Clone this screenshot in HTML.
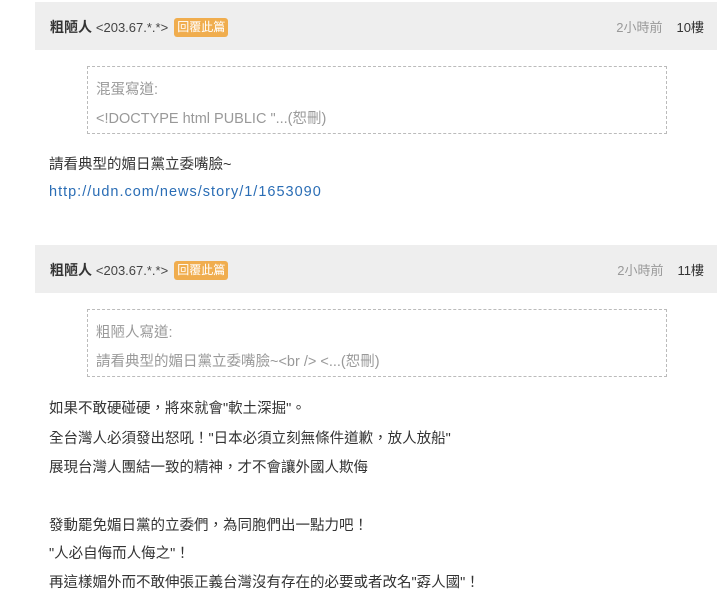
<!DOCTYPE html>
<html><head><meta charset="utf-8"><style>
body{margin:0;width:720px;height:610px;background:#fff;font-family:"Liberation Sans","Noto Sans CJK TC",sans-serif;font-size:14.5px;color:#333;position:relative;overflow:hidden}
.hd{position:absolute;left:35px;width:682px;height:48px;background:#eeeeee}
.hd .n{position:absolute;left:15px;top:15px;font-size:14px;color:#333}
.hd .n b{font-weight:bold;color:#333}
.hd .n .ip{font-size:13px;color:#444}
.btn{display:inline-block;background:#f0ad4e;color:#fff;font-size:12px;padding:1px 3px;border-radius:3px;margin-left:6px;line-height:17px;vertical-align:1px}
.hd .t{position:absolute;right:13px;top:15px;font-size:13px}
.hd .t span{color:#999;margin-right:14px}
.q{position:absolute;left:87px;width:578px;height:66px;border:1px dashed #bbb;color:#999;font-size:14.5px}
.q div{position:absolute;left:8px}
.l{position:absolute;left:49px;font-size:14.5px;color:#333;white-space:nowrap}
a{color:#2a6db5;text-decoration:none;letter-spacing:1px}
</style></head><body>
<div class="hd" style="top:2px"><div class="n"><b>粗陋人</b> <span class="ip">&lt;203.67.*.*&gt;</span><span class="btn">回覆此篇</span></div><div class="t"><span>2小時前</span>10樓</div></div>
<div class="q" style="top:66px"><div style="top:11px">混蛋寫道:</div><div style="top:40px">&lt;!DOCTYPE html PUBLIC "...(恕刪)</div></div>
<div class="l" style="top:153px">請看典型的媚日黨立委嘴臉~</div>
<div class="l" style="top:184px"><a>http://udn.com/news/story/1/1653090</a></div>
<div class="hd" style="top:245px"><div class="n"><b>粗陋人</b> <span class="ip">&lt;203.67.*.*&gt;</span><span class="btn">回覆此篇</span></div><div class="t"><span>2小時前</span>11樓</div></div>
<div class="q" style="top:309px"><div style="top:11px">粗陋人寫道:</div><div style="top:40px">請看典型的媚日黨立委嘴臉~&lt;br /&gt; &lt;...(恕刪)</div></div>
<div class="l" style="top:397px">如果不敢硬碰硬，將來就會"軟土深掘"。</div>
<div class="l" style="top:427px">全台灣人必須發出怒吼！"日本必須立刻無條件道歉，放人放船"</div>
<div class="l" style="top:456px">展現台灣人團結一致的精神，才不會讓外國人欺侮</div>
<div class="l" style="top:514px">發動罷免媚日黨的立委們，為同胞們出一點力吧！</div>
<div class="l" style="top:542px">"人必自侮而人侮之"！</div>
<div class="l" style="top:571px">再這樣媚外而不敢伸張正義台灣沒有存在的必要或者改名"孬人國"！</div>
</body></html>
